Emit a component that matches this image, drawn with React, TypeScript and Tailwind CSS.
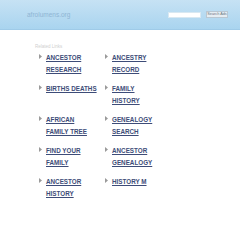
import React from 'react';

// each link is split into the lines it wraps to in the reference
const links: string[][][] = [
    [['ANCESTOR', 'RESEARCH'], ['ANCESTRY', 'RECORD']],
    [['BIRTHS DEATHS'], ['FAMILY', 'HISTORY']],
    [['AFRICAN', 'FAMILY TREE'], ['GENEALOGY', 'SEARCH']],
    [['FIND YOUR', 'FAMILY'], ['ANCESTOR', 'GENEALOGY']],
    [['ANCESTOR', 'HISTORY'], ['HISTORY M']],
];

const Arrow = () => (
    <svg width="3" height="5" viewBox="0 0 3 5" className="mt-[2px] shrink-0">
        <polygon points="0,0 3,2.5 0,5" fill="#9a9a9a" />
    </svg>
);

const LinkItem = ({ lines }: { lines: string[] }) => (
    <div className="flex gap-[4px]">
        <Arrow />
        <a
            href="#"
            className="block whitespace-nowrap text-[6.3px] leading-[12px] font-bold text-[#3d4c78] underline underline-offset-[1px]"
        >
            {lines.map((l, i) => (
                <React.Fragment key={i}>
                    {i > 0 && <br />}
                    {l}
                </React.Fragment>
            ))}
        </a>
    </div>
);

export default function App() {
    return (
        <div className="w-[240px] h-[240px] bg-white overflow-hidden" style={{ fontFamily: '"Liberation Sans", Arial, sans-serif' }}>
            <div className="h-[30px] bg-gradient-to-b from-[#c6e2f4] to-[#a9d4ef] border-b border-[#9fcbe8] flex items-center justify-between pl-[27px] pr-[12px]">
                <span className="text-[6.5px] text-[#8fb5d4]">afrolumens.org</span>
                <div className="flex items-center gap-[5px]">
                    <div className="w-[33px] h-[6px] bg-white border border-[#d8e8f2]" />
                    <div className="h-[7px] w-[22px] bg-[#e6edf2] border border-[#b9c7d2] text-[3.8px] leading-[5px] text-[#6b7680] text-center">
                        Search Ads
                    </div>
                </div>
            </div>

            <div className="pl-[35px] pt-[14px]">
                <div className="text-[4.5px] leading-[6px] text-[#cfcfcf]">Related Links</div>
            </div>

            <div className="pl-[39px] pt-[2px] grid grid-cols-[66px_66px] gap-y-[7px]">
                {links.map((row, i) => (
                    <React.Fragment key={i}>
                        <LinkItem lines={row[0]} />
                        <LinkItem lines={row[1]} />
                    </React.Fragment>
                ))}
            </div>
        </div>
    );
}
